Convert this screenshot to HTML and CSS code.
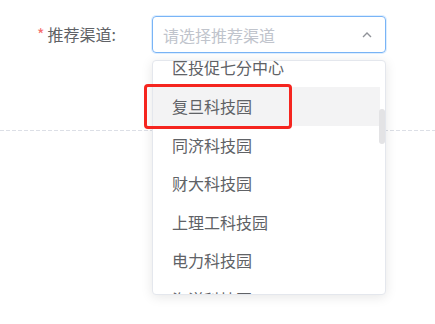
FILE: index.html
```html
<!DOCTYPE html>
<html lang="zh-CN">
<head>
<meta charset="utf-8">
<link rel="stylesheet" href="styles.css">
</head>
<body>
<div class="page">
  <div class="form-item">
    <label class="label"><span class="star">*</span>推荐渠道:</label>
    <div class="select">
      <span class="placeholder">请选择推荐渠道</span>
      <svg class="arrow" width="10" height="6" viewBox="0 0 10 6"><polyline points="1,5 5,1 9,5" fill="none" stroke="#909399" stroke-width="1.4"/></svg>
    </div>
    <div class="dropdown">
      <div class="scroll">
        <ul class="options">
          <li class="option">区投促七分中心</li>
          <li class="option hover">复旦科技园</li>
          <li class="option">同济科技园</li>
          <li class="option">财大科技园</li>
          <li class="option">上理工科技园</li>
          <li class="option">电力科技园</li>
          <li class="option">海洋科技园</li>
        </ul>
      </div>
      <div class="thumb"></div>
    </div>
    <div class="mark"></div>
  </div>
  <div class="divider"></div>
</div>
</body>
</html>
```
FILE: styles.css
```css
html, body {
  margin: 0;
  padding: 0;
  background: #ffffff;
}
body {
  font-family: "Noto Sans CJK SC", "Noto Sans", sans-serif;
  font-size: 16px;
  color: #606266;
  min-height: 324px;
}
.page {
  position: relative;
  padding-top: 16px;
  width: 435px;
  min-height: 308px;
}
.form-item {
  position: relative;
  display: flex;
  align-items: center;
  height: 37px;
}
.label {
  box-sizing: border-box;
  width: 152px;
  padding-left: 37px;
  line-height: 37px;
  font-size: 16px;
  color: #606266;
}
.star {
  color: #f56c6c;
  margin-right: 3px;
}
.select {
  box-sizing: border-box;
  width: 234px;
  height: 37px;
  border: 1px solid #79b4f6;
  box-shadow: 0 0 0 1px rgba(64, 158, 255, 0.18);
  border-radius: 4px;
  display: flex;
  align-items: center;
  justify-content: space-between;
  padding: 0 13px 0 10px;
}
.placeholder {
  color: #c0c4cc;
  font-size: 16px;
}
.arrow {
  display: block;
}
.dropdown {
  position: absolute;
  left: 152px;
  top: 44px;
  box-sizing: border-box;
  width: 234px;
  height: 235px;
  border: 1px solid #e4e7ed;
  border-radius: 4px;
  background: #ffffff;
  box-shadow: 0 2px 12px rgba(0, 0, 0, 0.1);
  overflow: hidden;
  z-index: 2;
}
.scroll {
  height: 100%;
  overflow: hidden;
}
.options {
  list-style: none;
  margin: -12.6px 5px 0 0;
  padding: 0;
}
.option {
  height: 38.6px;
  line-height: 38.6px;
  padding-left: 19px;
  font-size: 16px;
  color: #606266;
  white-space: nowrap;
}
.option.hover {
  background: #f3f3f4;
}
.thumb {
  position: absolute;
  right: 0;
  top: 48px;
  width: 6px;
  height: 35px;
  border-radius: 3px;
  background: #e3e3e5;
}
.mark {
  position: absolute;
  left: 144px;
  top: 68px;
  box-sizing: border-box;
  width: 148px;
  height: 45px;
  border: 3px solid #f5251f;
  border-radius: 4px;
  z-index: 3;
}
.divider {
  margin-top: 77px;
  height: 1px;
  background: repeating-linear-gradient(to right, #dcdfe6 0 4px, transparent 4px 6px);
}
```
